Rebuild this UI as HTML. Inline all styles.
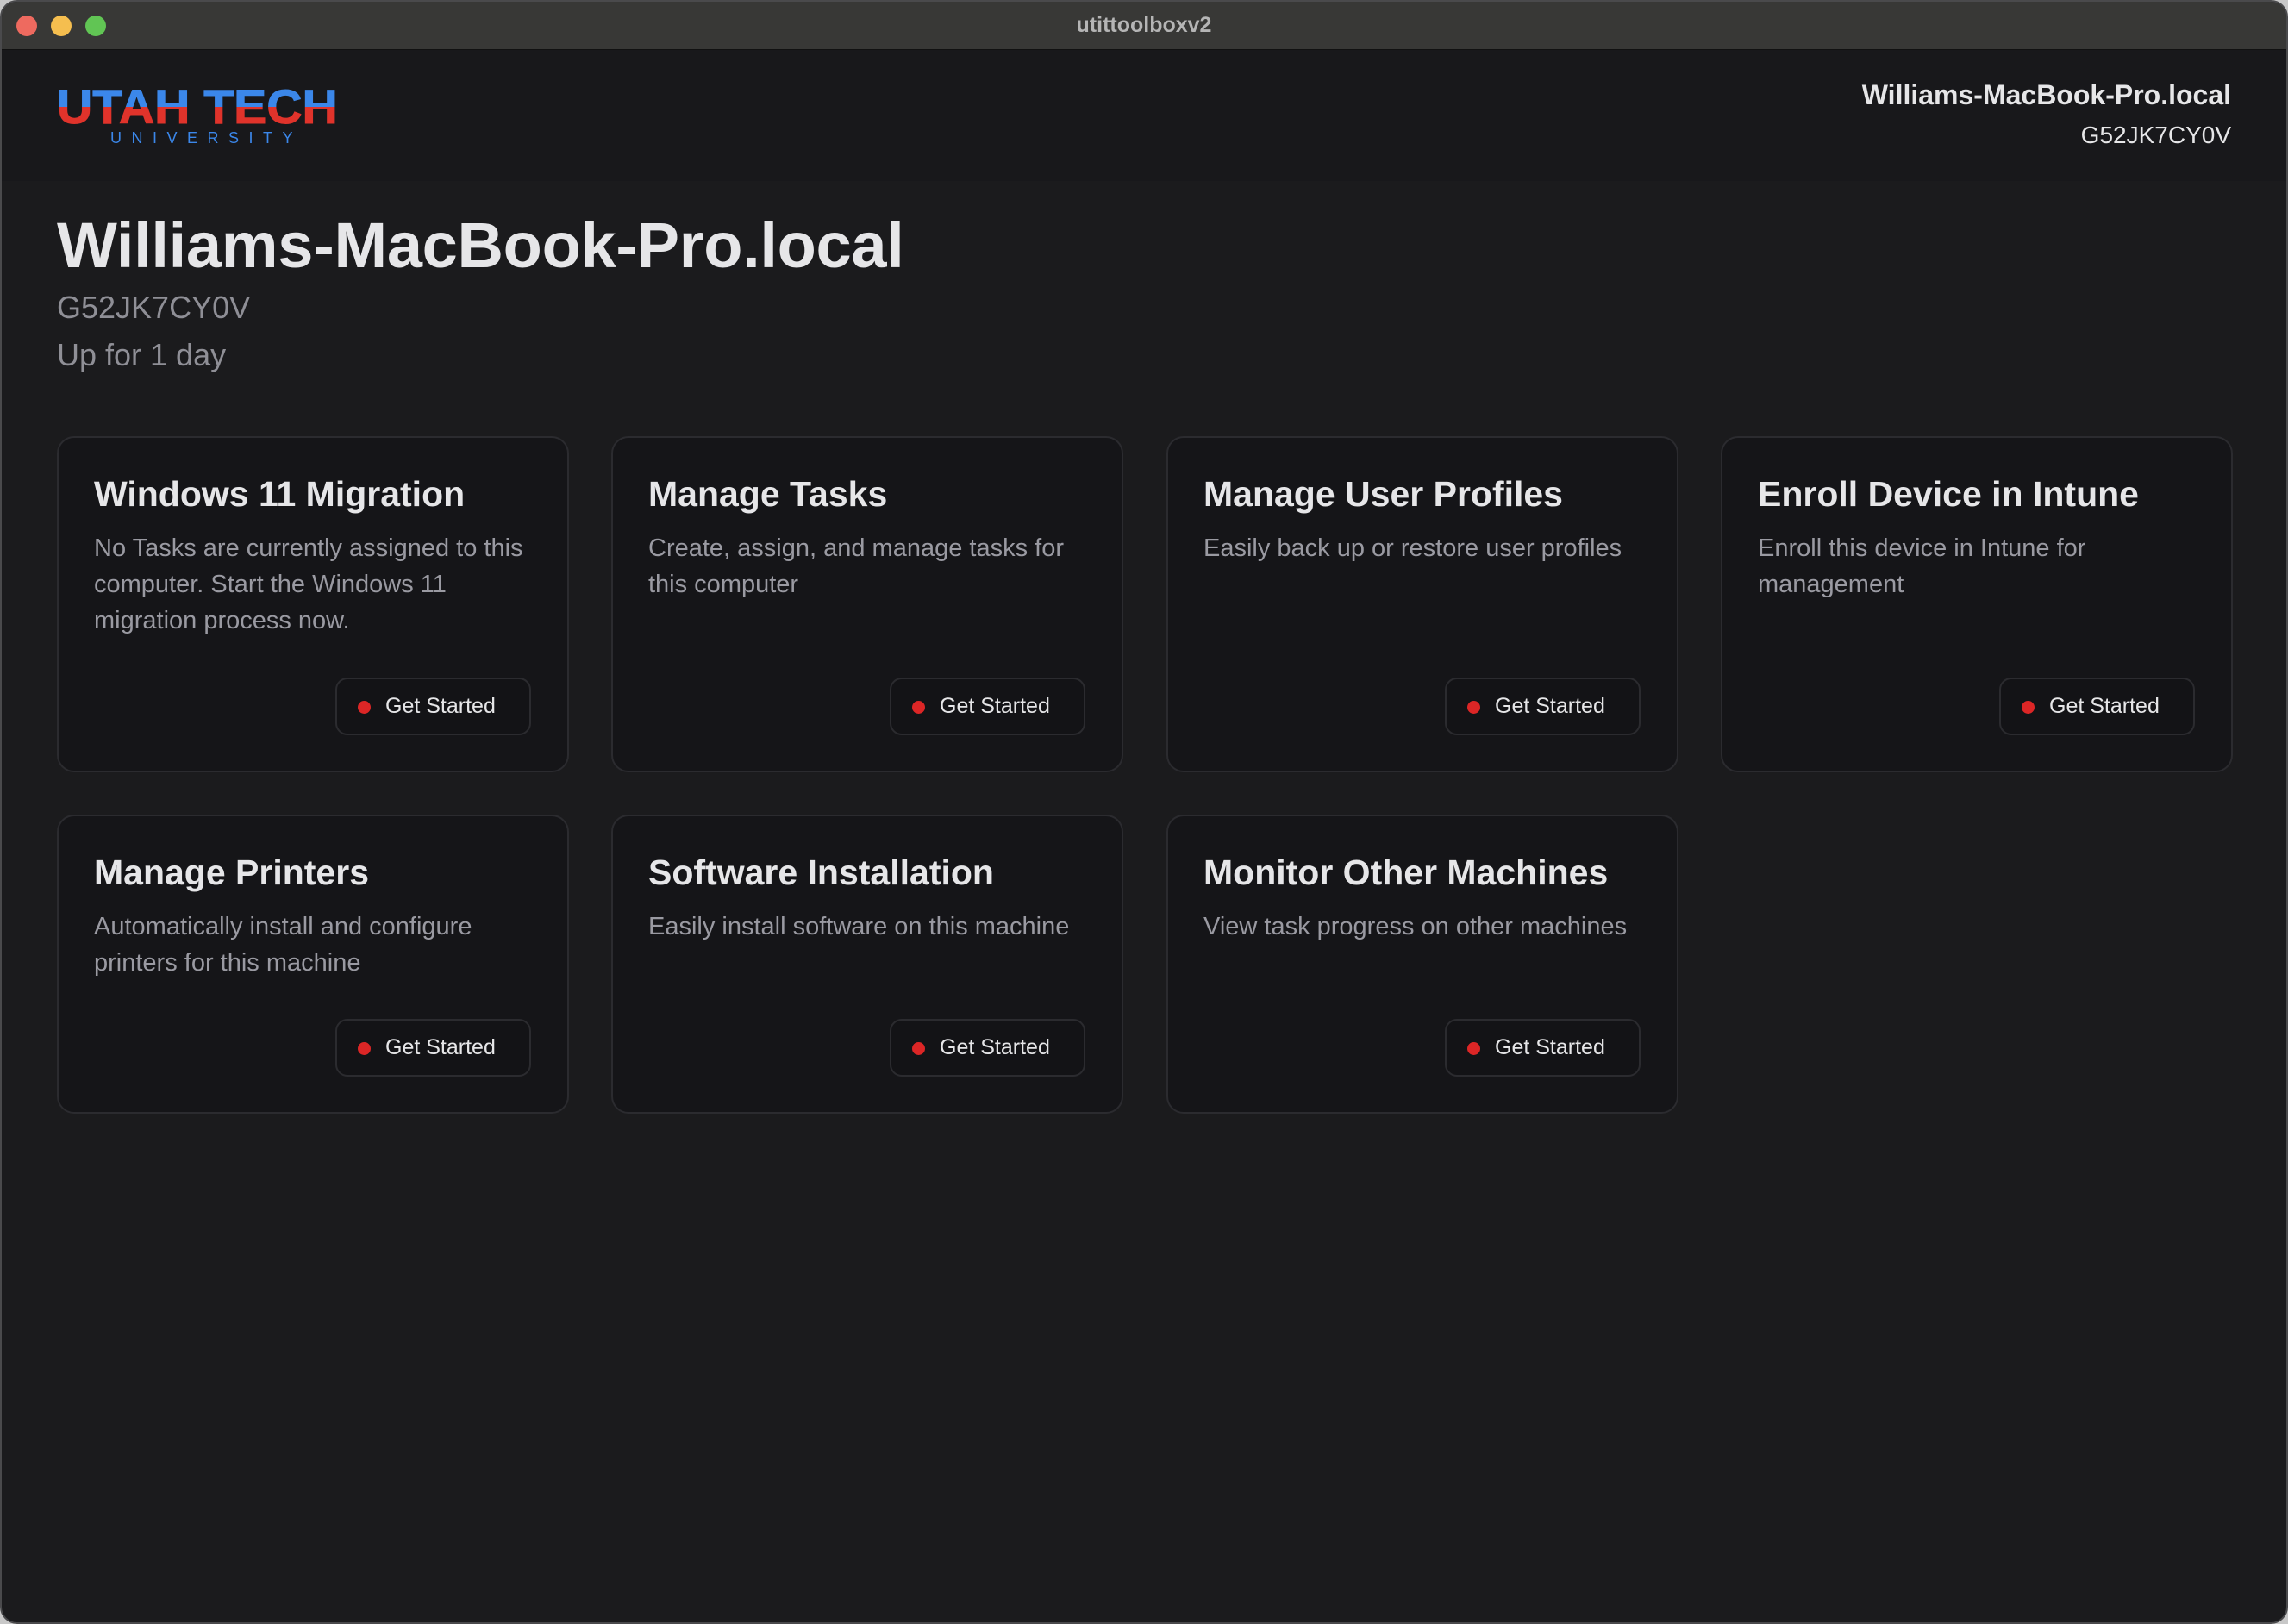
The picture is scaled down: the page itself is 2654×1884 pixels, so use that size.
<!DOCTYPE html>
<html><head><meta charset="utf-8"><style>
*{margin:0;padding:0;box-sizing:border-box}
html,body{width:2654px;height:1884px;background:#c8c8c8;overflow:hidden}
.win{position:absolute;left:0;top:0;width:2654px;height:1884px;border-radius:20px;overflow:hidden;background:#1b1b1d;border:2px solid #4a4a4c;font-family:"Liberation Sans",sans-serif}
.tb{height:56px;background:#383836;position:relative;border-bottom:1px solid #111}
.dot{position:absolute;top:16px;width:24px;height:24px;border-radius:50%}
.tt{position:absolute;left:0;right:0;top:13px;text-align:center;color:#b5b5b5;font-size:25px;font-weight:bold}
.hdr{height:152px;background:#18181b;position:relative}
.logo{position:absolute;left:64px;top:94px;font-weight:900;font-size:56px;line-height:1;letter-spacing:0px;background:linear-gradient(#3b87ea 0 50%,#e0332b 50% 100%);-webkit-background-clip:text;background-clip:text;color:transparent;transform:scaleX(1.02);transform-origin:left;-webkit-text-stroke:1px transparent}
.uni{position:absolute;left:126px;top:148px;color:#3b87ea;font-size:18px;letter-spacing:11.5px}
.hr{position:absolute;right:64px;top:90px;text-align:right;color:#e6e6e8}
.hr b{display:block;font-size:32px}
.hr span{display:block;font-size:28px;margin-top:12px}
.h1{position:absolute;left:64px;top:240px;font-size:74px;font-weight:bold;color:#e6e6e8;letter-spacing:-0.3px}
.sub{position:absolute;left:64px;color:#8f8f96;font-size:36px}
.card{position:absolute;width:594px;background:#151518;border:2px solid #2b2b2f;border-radius:20px}
.card h2{position:absolute;left:41px;top:42px;font-size:41px;color:#e6e6e8;font-weight:bold;white-space:nowrap}
.card p{position:absolute;left:41px;top:107px;font-size:29px;line-height:42px;color:#9a9aa2;white-space:nowrap}
.btn{position:absolute;right:42px;bottom:41px;width:227px;height:67px;border:2px solid #2b2b2f;border-radius:14px;background:#131316;color:#e6e6e8;font-size:25px}
.btn i{position:absolute;left:24px;top:25px;width:15px;height:15px;border-radius:50%;background:#dc2626}
.btn span{position:absolute;left:56px;top:17px}
</style></head><body><div class="win">
<div class="tb"><div class="dot" style="left:17px;background:#ee6a5f"></div><div class="dot" style="left:57px;background:#f5be4f"></div><div class="dot" style="left:97px;background:#61c554"></div><div class="tt">utittoolboxv2</div></div>
<div class="hdr">
</div>
<div class="logo">UTAH TECH</div><div class="uni">UNIVERSITY</div>
<div class="hr"><b>Williams-MacBook-Pro.local</b><span>G52JK7CY0V</span></div>
<div class="h1">Williams-MacBook-Pro.local</div>
<div class="sub" style="top:334px">G52JK7CY0V</div>
<div class="sub" style="top:389px">Up for 1 day</div>

<div class="card" style="left:64px;top:504px;height:390px"><h2>Windows 11 Migration</h2><p>No Tasks are currently assigned to this<br>computer. Start the Windows 11<br>migration process now.</p><div class="btn"><i></i><span>Get Started</span></div></div>
<div class="card" style="left:707px;top:504px;height:390px"><h2>Manage Tasks</h2><p>Create, assign, and manage tasks for<br>this computer</p><div class="btn"><i></i><span>Get Started</span></div></div>
<div class="card" style="left:1351px;top:504px;height:390px"><h2>Manage User Profiles</h2><p>Easily back up or restore user profiles</p><div class="btn"><i></i><span>Get Started</span></div></div>
<div class="card" style="left:1994px;top:504px;height:390px"><h2>Enroll Device in Intune</h2><p>Enroll this device in Intune for<br>management</p><div class="btn"><i></i><span>Get Started</span></div></div>

<div class="card" style="left:64px;top:943px;height:347px"><h2>Manage Printers</h2><p>Automatically install and configure<br>printers for this machine</p><div class="btn"><i></i><span>Get Started</span></div></div>
<div class="card" style="left:707px;top:943px;height:347px"><h2>Software Installation</h2><p>Easily install software on this machine</p><div class="btn"><i></i><span>Get Started</span></div></div>
<div class="card" style="left:1351px;top:943px;height:347px"><h2>Monitor Other Machines</h2><p>View task progress on other machines</p><div class="btn"><i></i><span>Get Started</span></div></div>
</div></body></html>
